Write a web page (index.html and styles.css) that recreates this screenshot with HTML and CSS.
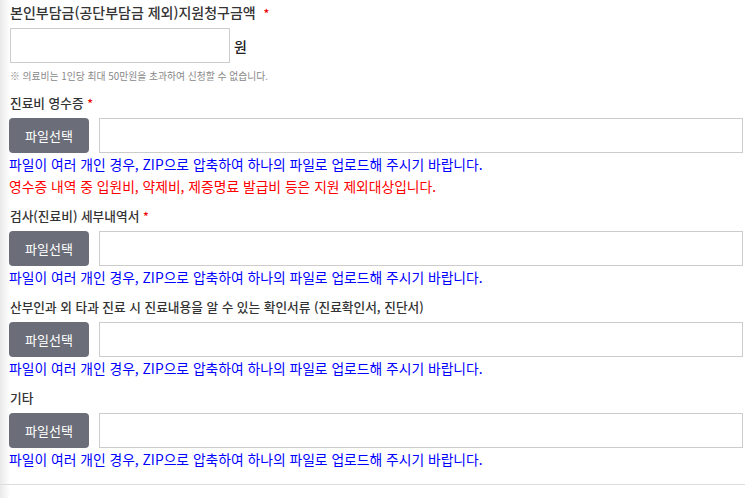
FILE: index.html
```html
<!DOCTYPE html>
<html lang="ko">
<head>
    <meta charset="UTF-8">
    <meta name="viewport" content="width=device-width, initial-scale=1.0">
    <title>지원청구</title>
    <link rel="stylesheet" href="styles.css">
</head>
<body>

    <div class="form-wrap">
        <div class="field">
            <p class="field-label first">본인부담금(공단부담금 제외)지원청구금액 &nbsp;<span class="req">*</span></p>
            <div class="amount-row">
                <input type="text" class="amount-input">
                <span class="unit">원</span>
            </div>
            <p class="note">※ 의료비는 1인당 최대 50만원을 초과하여 신청할 수 없습니다.</p>
        </div>

        <div class="field">
            <p class="field-label">진료비 영수증 <span class="req">*</span></p>
            <div class="file-row">
                <button class="file-btn">파일선택</button>
                <input type="text" class="file-name" readonly>
            </div>
            <p class="help blue">파일이 여러 개인 경우, ZIP으로 압축하여 하나의 파일로 업로드해 주시기 바랍니다.</p>
            <p class="help red">영수증 내역 중 입원비, 약제비, 제증명료 발급비 등은 지원 제외대상입니다.</p>
        </div>

        <div class="field">
            <p class="field-label">검사(진료비) 세부내역서 <span class="req">*</span></p>
            <div class="file-row">
                <button class="file-btn">파일선택</button>
                <input type="text" class="file-name" readonly>
            </div>
            <p class="help blue">파일이 여러 개인 경우, ZIP으로 압축하여 하나의 파일로 업로드해 주시기 바랍니다.</p>
        </div>

        <div class="field">
            <p class="field-label">산부인과 외 타과 진료 시 진료내용을 알 수 있는 확인서류 (진료확인서, 진단서)</p>
            <div class="file-row">
                <button class="file-btn">파일선택</button>
                <input type="text" class="file-name" readonly>
            </div>
            <p class="help blue">파일이 여러 개인 경우, ZIP으로 압축하여 하나의 파일로 업로드해 주시기 바랍니다.</p>
        </div>

        <div class="field">
            <p class="field-label">기타</p>
            <div class="file-row">
                <button class="file-btn">파일선택</button>
                <input type="text" class="file-name" readonly>
            </div>
            <p class="help blue">파일이 여러 개인 경우, ZIP으로 압축하여 하나의 파일로 업로드해 주시기 바랍니다.</p>
        </div>
    </div>

    <hr class="divider">

</body>
</html>
```

FILE: styles.css
```css
body {
    margin: 0;
    font-family: "Noto Sans CJK KR", "Noto Sans", sans-serif;
    color: #333;
    background: linear-gradient(to right, #e9e9e9, #fff 10px);
}
p {
    margin: 0;
}
.form-wrap {
    padding: 2px 2px 0 9px;
}
.field {
    margin-bottom: 9px;
}
.field-label {
    font-size: 12.7px;
    font-weight: 500;
    line-height: 20px;
    margin-bottom: 5px;
    padding-left: 1px;
}
.field-label.first {
    font-size: 14px;
}
.req {
    color: #e00;
    font-size: 12px;
}
.amount-row {
    display: flex;
    align-items: center;
    gap: 4px;
}
.amount-input {
    width: 220px;
    height: 35px;
    box-sizing: border-box;
    border: 1px solid #ccc;
    margin: 0 0 0 1px;
}
.unit {
    font-size: 14px;
    font-weight: 500;
    color: #222;
}
.note {
    font-size: 9.8px;
    color: #888;
    line-height: 16px;
    margin-top: 5px;
    padding-left: 1px;
}
.file-row {
    display: flex;
    gap: 10px;
    height: 35px;
}
.file-btn {
    width: 80px;
    border: none;
    border-radius: 4px;
    background: #6b6e79;
    color: #fff;
    font-family: inherit;
    font-size: 13px;
    padding: 0;
}
.file-name {
    flex: 1;
    margin: 0;
    box-sizing: border-box;
    border: 1px solid #ccc;
    background: #fff;
}
.help {
    font-size: 13.8px;
    line-height: 22px;
}
.help.blue {
    color: #0000ff;
}
.help.red {
    color: #ff0000;
}
.divider {
    border: none;
    border-top: 1px solid #ddd;
    margin: 14px 0 0;
}
```
